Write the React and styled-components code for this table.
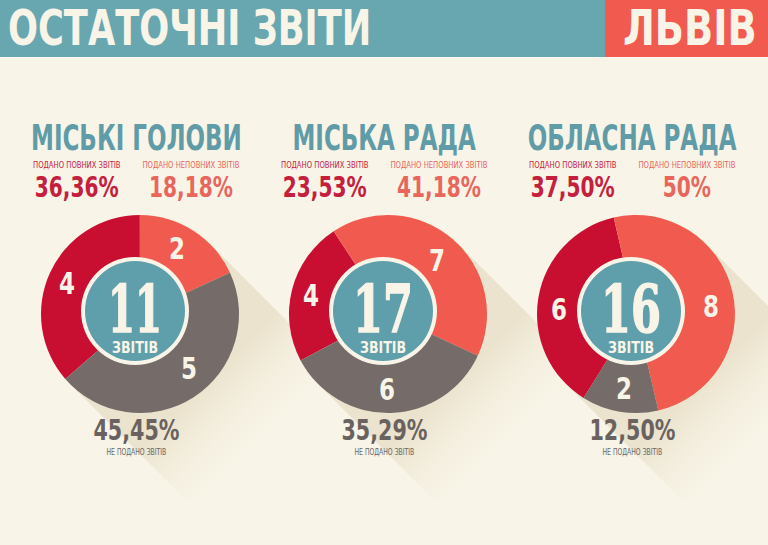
import React from "react";
import styled, { createGlobalStyle } from "styled-components";

const CREAM = "#f8f4e7";
const TEAL = "#68a6b0";
const CRIMSON = "#c80f31";
const CORAL = "#f15a4f";
const GRAY = "#756b69";
const CONDENSED = `"DejaVu Sans Condensed", "DejaVu Sans", "Liberation Sans", sans-serif`;

const GlobalStyle = createGlobalStyle`
  html, body {
    margin: 0;
    padding: 0;
    background: ${CREAM};
  }
  body {
    font-family: ${CONDENSED};
  }
`;

const boards = [
  {
    title: "МІСЬКІ ГОЛОВИ",
    full: "36,36%",
    partial: "18,18%",
    none: "45,45%",
    total: 11,
    numWidth: 54,
    start: 229,
    slices: [
      { value: 4, color: CRIMSON, dx: -73, dy: -31 },
      { value: 2, color: CORAL, dx: 37, dy: -66 },
      { value: 5, color: GRAY, dx: 49, dy: 54 },
    ],
  },
  {
    title: "МІСЬКА РАДА",
    full: "23,53%",
    partial: "41,18%",
    none: "35,29%",
    total: 17,
    numWidth: 60,
    start: 242,
    slices: [
      { value: 4, color: CRIMSON, dx: -77, dy: -19 },
      { value: 7, color: CORAL, dx: 49, dy: -54 },
      { value: 6, color: GRAY, dx: -1, dy: 75 },
    ],
  },
  {
    title: "ОБЛАСНА РАДА",
    full: "37,50%",
    partial: "50%",
    none: "12,50%",
    total: 16,
    numWidth: 60,
    start: 212,
    slices: [
      { value: 6, color: CRIMSON, dx: -77, dy: -5 },
      { value: 8, color: CORAL, dx: 75, dy: -8 },
      { value: 2, color: GRAY, dx: -12, dy: 74 },
    ],
  },
];

const Page = styled.div`
  width: 768px;
  height: 545px;
  overflow: hidden;
  background: ${CREAM};
`;

const Header = styled.header`
  display: flex;
  height: 57px;
  border-bottom: 1px solid #fbf9f1;
`;

const HeaderTitle = styled.div`
  flex: 1;
  padding-left: 8px;
  display: flex;
  align-items: center;
  background: ${TEAL};
`;

const City = styled.div`
  width: 163px;
  display: flex;
  align-items: center;
  justify-content: center;
  padding-left: 6px;
  box-sizing: border-box;
  background: ${CORAL};
`;

const HeaderText = styled.h1`
  margin: 0;
  display: inline-block;
  color: ${CREAM};
  font-size: 49px;
  font-weight: 700;
  line-height: 1;
  white-space: nowrap;
  transform: scaleX(${(p) => p.$squeeze || 0.8});
  transform-origin: ${(p) => p.$origin || "center"};
`;

const Boards = styled.main`
  display: grid;
  grid-template-columns: repeat(3, 206px);
  column-gap: 42px;
  padding: 62px 0 0 33px;
`;

const Board = styled.section`
  display: flex;
  flex-direction: column;
  align-items: center;
`;

const BoardTitle = styled.h2`
  margin: 0;
  color: #5f9ca7;
  font-size: 36px;
  font-weight: 700;
  line-height: 36px;
  white-space: nowrap;
  transform: scaleX(0.71);
`;

const Stats = styled.div`
  align-self: flex-start;
  width: 258px;
  display: flex;
  justify-content: space-between;
  margin-top: 4px;
  transform: scaleX(0.8);
  transform-origin: left;
`;

const Stat = styled.div`
  display: flex;
  flex-direction: column;
  align-items: center;
  color: ${(p) => p.$color};
`;

const StatLabel = styled.span`
  font-size: 9.5px;
  line-height: 10px;
  white-space: nowrap;
  text-transform: uppercase;
`;

const StatValue = styled.span`
  margin-top: 4px;
  font-size: 28px;
  font-weight: 700;
  line-height: 28px;
`;

const Chart = styled.svg`
  display: block;
  overflow: visible;
`;

const Missing = styled.div`
  margin-top: 3px;
  color: #6a6260;
  font-size: 28px;
  font-weight: 700;
  line-height: 28px;
  transform: scaleX(0.82);
`;

const MissingLabel = styled.div`
  margin-top: 3px;
  color: #6a6260;
  font-size: 8.5px;
  line-height: 9px;
  transform: scaleX(0.8);
`;

const toXY = (cx, cy, r, deg) => {
  const a = (deg * Math.PI) / 180;
  return [cx + r * Math.sin(a), cy - r * Math.cos(a)];
};

const arc = (cx, cy, r, a0, a1) => {
  const [x0, y0] = toXY(cx, cy, r, a0);
  const [x1, y1] = toXY(cx, cy, r, a1);
  const large = a1 - a0 > 180 ? 1 : 0;
  return `M${cx},${cy} L${x0},${y0} A${r},${r} 0 ${large} 1 ${x1},${y1} Z`;
};

const Pie = ({ board, id }) => {
  const W = 206;
  const H = 212;
  const cx = 107;
  const cy = 112;
  const r = 99;
  const k = r / Math.SQRT2;
  const L = 260;
  let angle = board.start;
  const icx = cx - 5;
  const icy = cy - 3;

  return (
    <Chart width={W} height={H} viewBox={`0 0 ${W} ${H}`}>
      <defs>
        <linearGradient
          id={`shade-${id}`}
          gradientUnits="userSpaceOnUse"
          x1={cx}
          y1={cy}
          x2={cx + 135}
          y2={cy + 135}
        >
          <stop offset="0.5" stopColor="#ebe3cd" />
          <stop offset="1" stopColor={CREAM} stopOpacity="0" />
        </linearGradient>
      </defs>
      <polygon
        points={`${cx + k},${cy - k} ${cx + k + L},${cy - k + L} ${cx - k + L},${cy + k + L} ${cx - k},${cy + k}`}
        fill={`url(#shade-${id})`}
      />
      {board.slices.map((s) => {
        const sweep = (s.value / board.total) * 360;
        const d = arc(cx, cy, r, angle, angle + sweep);
        angle += sweep;
        return <path key={s.color} d={d} fill={s.color} />;
      })}
      <circle cx={icx} cy={icy} r={54} fill={CREAM} />
      <circle cx={icx} cy={icy} r={50} fill="#5f9fab" />
      {board.slices.map((s) => (
        <text
          key={`l-${s.color}`}
          x={cx + s.dx - 8}
          y={cy + s.dy + 11}
          textLength={16}
          lengthAdjust="spacingAndGlyphs"
          fill={CREAM}
          fontFamily={CONDENSED}
          fontWeight="700"
          fontSize="30"
        >
          {s.value}
        </text>
      ))}
      <text
        x={icx - board.numWidth / 2}
        y={icy + 21}
        textLength={board.numWidth}
        lengthAdjust="spacingAndGlyphs"
        fill={CREAM}
        stroke={CREAM}
        strokeWidth="1.6"
        fontFamily={`"DejaVu Serif", "Liberation Serif", serif`}
        fontWeight="700"
        fontSize="66"
      >
        {board.total}
      </text>
      <text
        x={icx - 23}
        y={icy + 42}
        textLength={46}
        lengthAdjust="spacingAndGlyphs"
        fill={CREAM}
        fontFamily={CONDENSED}
        fontWeight="700"
        fontSize="16"
      >
        ЗВІТІВ
      </text>
    </Chart>
  );
};

export default function App() {
  return (
    <Page>
      <GlobalStyle />
      <Header>
        <HeaderTitle>
          <HeaderText $origin="left">ОСТАТОЧНІ ЗВІТИ</HeaderText>
        </HeaderTitle>
        <City>
          <HeaderText $squeeze={0.87}>ЛЬВІВ</HeaderText>
        </City>
      </Header>
      <Boards>
        {boards.map((b, i) => (
          <Board key={b.title}>
            <BoardTitle>{b.title}</BoardTitle>
            <Stats>
              <Stat $color="#c4203d">
                <StatLabel>подано повних звітів</StatLabel>
                <StatValue>{b.full}</StatValue>
              </Stat>
              <Stat $color="#e8665b">
                <StatLabel>подано неповних звітів</StatLabel>
                <StatValue>{b.partial}</StatValue>
              </Stat>
            </Stats>
            <Pie board={b} id={i} />
            <Missing>{b.none}</Missing>
            <MissingLabel>НЕ ПОДАНО ЗВІТІВ</MissingLabel>
          </Board>
        ))}
      </Boards>
    </Page>
  );
}
